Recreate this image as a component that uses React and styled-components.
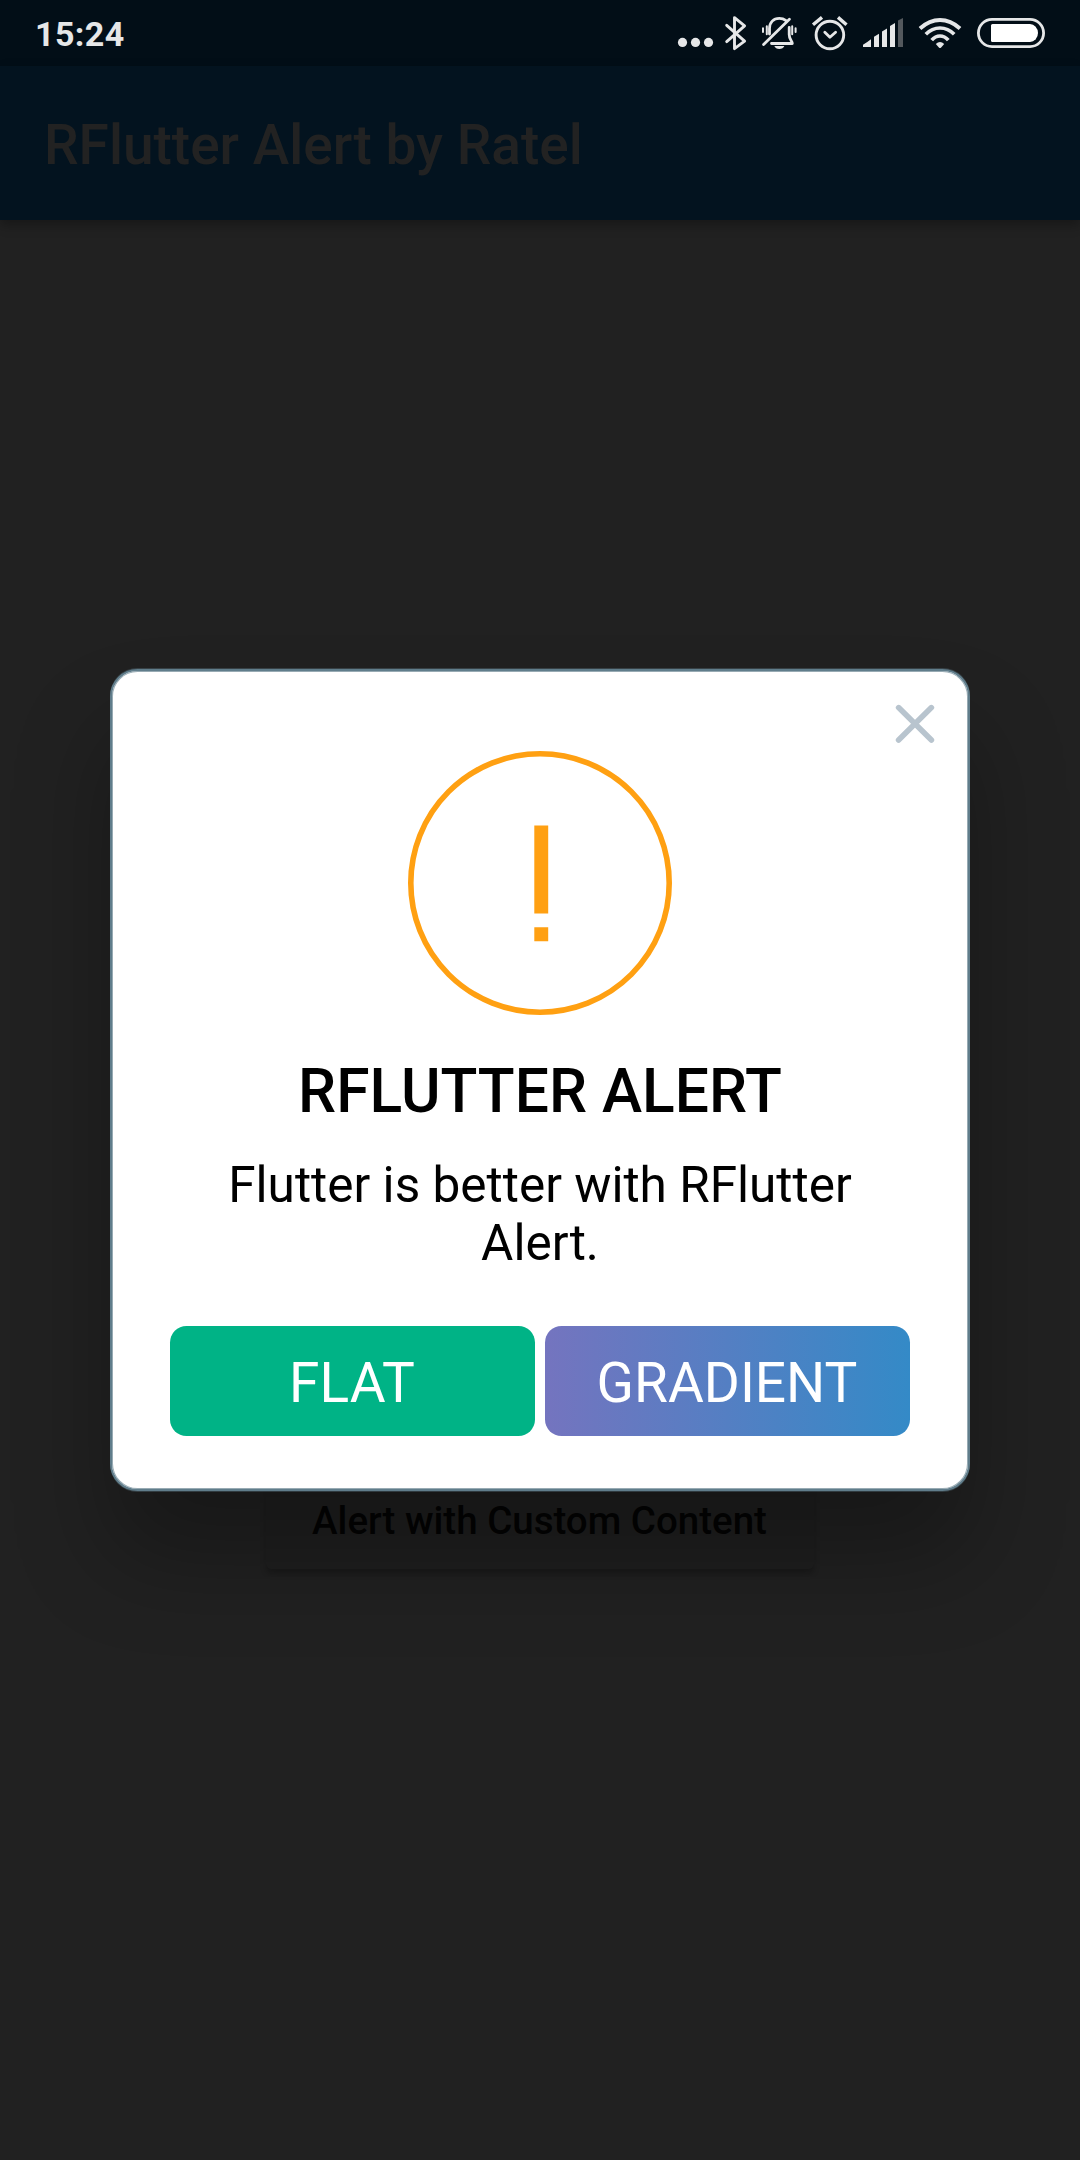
import React from "react";
import styled, { createGlobalStyle } from "styled-components";

const GlobalStyle = createGlobalStyle`
  *, *::before, *::after { box-sizing: border-box; }
  body { margin: 0; background: #212121; font-family: Roboto, "Noto Sans", sans-serif; }
`;

const Screen = styled.div`
  width: 1080px;
  height: 2160px;
  display: flex;
  flex-direction: column;
  overflow: hidden;
  background: #212121;
`;

const StatusBar = styled.div`
  height: 66px;
  flex: none;
  display: flex;
  align-items: center;
  justify-content: space-between;
  padding: 0 35px;
  background: #020e17;
`;

const Clock = styled.time`
  font-size: 34px;
  font-weight: 700;
  line-height: 40px;
  letter-spacing: 0.4px;
  color: #e6e7e8;
  padding-top: 2px;
`;

const StatusIcons = styled.div`
  display: flex;
  height: 66px;
  color: #e6e7e8;
`;

const Glyph = styled.svg`
  display: block;
  width: ${(p) => p.$width}px;
  height: 66px;
  flex: none;
`;

const AppBar = styled.header`
  height: 154px;
  flex: none;
  display: flex;
  align-items: center;
  padding: 4px 44px 0;
  background: #03131f;
  box-shadow: 0 5px 11px rgba(0, 0, 0, 0.3);
`;

const AppTitle = styled.h1`
  margin: 0;
  font-size: 55px;
  font-weight: 500;
  line-height: 64px;
  color: #222222;
`;

const Body = styled.main`
  flex: 1;
  display: flex;
  flex-direction: column;
  align-items: center;
  padding-top: 1249px;
`;

const RaisedButton = styled.button`
  height: 100px;
  width: 548px;
  flex: none;
  border: 0;
  border-radius: 5.5px;
  padding: 3px 44px 0 43px;
  background: #1f1f1f;
  box-shadow: 0 5px 6px -1px rgba(0, 0, 0, 0.28);
  font-family: inherit;
  font-size: 38.5px;
  font-weight: 500;
  line-height: 45px;
  white-space: nowrap;
  color: #030303;
`;

const Overlay = styled.div`
  position: fixed;
  inset: 0;
  width: 1080px;
  height: 2160px;
  display: flex;
  align-items: center;
  justify-content: center;
`;

const Dialog = styled.section`
  width: 860px;
  height: 822px;
  display: flex;
  flex-direction: column;
  align-items: center;
  background: #ffffff;
  border: 2px solid #607d8b;
  border-radius: 27.5px;
  box-shadow:
    inset 0 0 0 1px rgba(96, 125, 139, 0.65),
    0 1px 0 rgba(96, 125, 139, 0.35),
    0 -1px 0 rgba(96, 125, 139, 0.35),
    0 66px 96px rgba(0, 0, 0, 0.29);
`;

const DialogHeader = styled.div`
  align-self: stretch;
  display: flex;
  justify-content: flex-end;
  height: 80px;
  padding: 33px 33px 0 0;
`;

const CloseButton = styled.button`
  width: 40px;
  height: 40px;
  padding: 0;
  border: 0;
  background: transparent;

  svg { display: block; }
`;

const WarningIcon = styled.svg`
  display: block;
  width: 264px;
  height: 264px;
  flex: none;
`;

const DialogTitle = styled.h2`
  margin: 41px 0 0;
  font-size: 60.5px;
  font-weight: 500;
  line-height: 71px;
  color: #000000;
`;

const Description = styled.p`
  width: 740px;
  margin: 29px 0 0;
  padding: 0 50px;
  font-size: 49.5px;
  line-height: 58px;
  text-align: center;
  color: #000000;
`;

const Actions = styled.div`
  display: flex;
  gap: 10px;
  width: 740px;
  margin-top: 54px;
`;

const ActionButton = styled.button`
  flex: 1 1 0;
  min-width: 0;
  height: 110px;
  padding: 4px 1px 0 0;
  border: 0;
  border-radius: 16.5px;
  background: ${(p) => p.$fill};
  font-family: inherit;
  font-size: 55px;
  font-weight: 400;
  line-height: 64px;
  color: #ffffff;
`;

const line = { fill: "none", stroke: "currentColor", strokeLinecap: "round", strokeLinejoin: "round" };

const MoreDots = () => (
  <Glyph $width={40} viewBox="675 0 40 66">
    <g fill="currentColor">
      <circle cx="682.5" cy="42.4" r="4.6" />
      <circle cx="695.5" cy="42.4" r="4.6" />
      <circle cx="708.5" cy="42.4" r="4.6" />
    </g>
  </Glyph>
);

const Bluetooth = () => (
  <Glyph $width={40} viewBox="715 0 40 66">
    <path {...line} strokeWidth="2.9" d="M726.7 25.3 744.6 41.2 734.5 48.6V17.6L744.6 25.8 726.7 41.6" />
  </Glyph>
);

const BellOff = () => (
  <Glyph $width={50} viewBox="755 0 50 66">
    <path {...line} strokeWidth="2.8" d="M769.5 34V28.5C769.5 22.3 773.5 18.4 779.3 18.4C781.8 18.4 784 19 785.7 20.3M789.2 27.5V34.5C789.2 39.8 792.2 40.6 792.3 43.5H771.5M763.6 44.4 789.4 19.2" />
    <path {...line} strokeWidth="2" d="M766.8 26.2V34.2M763 28.2V32M792.2 26.2V34.2M795.6 28.2V32" />
    <path fill="currentColor" d="M774.3 46H784.4Q783 49 779.3 49T774.3 46Z" />
  </Glyph>
);

const AlarmClock = () => (
  <Glyph $width={50} viewBox="805 0 50 66">
    <circle {...line} strokeWidth="2.9" cx="829.9" cy="35" r="13.8" />
    <path {...line} strokeWidth="2.8" d="M824.8 32.2 829.9 37.3 835.6 32.2" />
    <path {...line} strokeWidth="3.4" strokeLinecap="butt" d="M813 24.8 822 17.4M838 17.4 846.5 24.8" />
  </Glyph>
);

const Signal = () => (
  <Glyph $width={55} viewBox="855 0 55 66">
    <path
      fill="currentColor"
      d="M863 47V44.7Q867 42.5 871 39.3V47ZM874 47V36.8L879 33.7V47ZM882 47V31.6L887 28.5V47ZM890 47V26L895 23V47Z"
    />
    <path fill="#53585d" d="M898 47V20.5L903 18V47Z" />
  </Glyph>
);

const Wifi = () => (
  <Glyph $width={60} viewBox="910 0 60 66">
    <g fill="none" stroke="currentColor">
      <path strokeWidth="4" d="M920 28.4Q929.5 20 940 20T960 28.4" />
      <path strokeWidth="3.7" d="M925.8 34.2Q932 28 940 28T954.2 34.2" />
      <path strokeWidth="3.7" d="M931.7 40.1Q935.3 36 940 36T948.3 40.1" />
    </g>
    <path fill="currentColor" d="M935.8 44Q940 40 944.2 44L940.9 47.7Q940 48.5 939.1 47.7Z" />
  </Glyph>
);

const Battery = () => (
  <Glyph $width={75} viewBox="970 0 75 66">
    <rect x="978.4" y="19.4" width="65.2" height="27.2" rx="13.6" fill="none" stroke="currentColor" strokeWidth="2.8" />
    <path fill="#ffffff" d="M992.5 24H1030A8 9 0 0 1 1030 42H992.5Q991 42 991 40.5V25.5Q991 24 992.5 24Z" />
  </Glyph>
);

export default function App() {
  return (
    <>
      <GlobalStyle />
      <Screen>
        <StatusBar>
          <Clock>15:24</Clock>
          <StatusIcons>
            <MoreDots />
            <Bluetooth />
            <BellOff />
            <AlarmClock />
            <Signal />
            <Wifi />
            <Battery />
          </StatusIcons>
        </StatusBar>
        <AppBar>
          <AppTitle>RFlutter Alert by Ratel</AppTitle>
        </AppBar>
        <Body>
          <RaisedButton>Alert with Custom Content</RaisedButton>
        </Body>
      </Screen>
      <Overlay>
        <Dialog role="dialog" aria-label="RFLUTTER ALERT">
          <DialogHeader>
            <CloseButton aria-label="Close">
              <svg width="40" height="40" viewBox="0 0 40 40" stroke="#b8c4ce" strokeWidth="5.6" strokeLinecap="round">
                <path d="M3.6 3.6 36.4 36.1M36.4 3.6 3.6 36.1" />
              </svg>
            </CloseButton>
          </DialogHeader>
          <WarningIcon viewBox="0 0 264 264">
            <circle cx="132" cy="132" r="129.2" fill="none" stroke="#ffa012" strokeWidth="5.6" />
            <path fill="#ffa012" d="M126.3 74.5H140.2V162.5H126.3ZM126.3 176.3H140.2V190.2H126.3Z" />
          </WarningIcon>
          <DialogTitle>RFLUTTER ALERT</DialogTitle>
          <Description>Flutter is better with RFlutter Alert.</Description>
          <Actions>
            <ActionButton $fill="#00b386">FLAT</ActionButton>
            <ActionButton $fill="linear-gradient(90deg, #7474bf, #348ac7)">GRADIENT</ActionButton>
          </Actions>
        </Dialog>
      </Overlay>
    </>
  );
}
